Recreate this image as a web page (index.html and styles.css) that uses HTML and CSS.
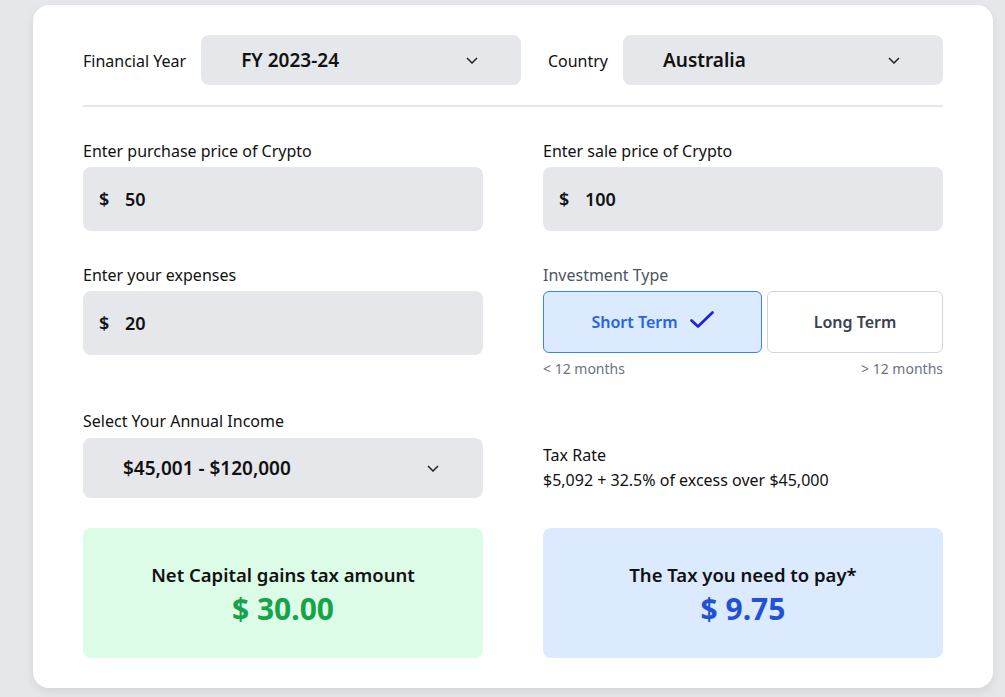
FILE: index.html
```html
<!DOCTYPE html>
<html lang="en">
<head>
<meta charset="utf-8">
<title>Crypto Tax Calculator</title>
<link rel="stylesheet" href="styles.css">
</head>
<body>
<div class="card">
  <div class="top-row">
    <div class="top-group">
      <span class="top-label">Financial Year</span>
      <div class="select top-select">
        <span class="select-value">FY 2023-24</span>
        <svg class="chev" width="12" height="7" viewBox="0 0 12 7"><path d="M1 1 L6 6 L11 1" fill="none" stroke="#222" stroke-width="1.5"/></svg>
      </div>
    </div>
    <div class="top-group">
      <span class="top-label">Country</span>
      <div class="select top-select">
        <span class="select-value">Australia</span>
        <svg class="chev" width="12" height="7" viewBox="0 0 12 7"><path d="M1 1 L6 6 L11 1" fill="none" stroke="#222" stroke-width="1.5"/></svg>
      </div>
    </div>
  </div>
  <div class="divider"></div>

  <div class="grid">
    <div class="field first">
      <div class="label">Enter purchase price of Crypto</div>
      <div class="input"><span class="cur">$</span><span>50</span></div>
    </div>
    <div class="field first">
      <div class="label">Enter sale price of Crypto</div>
      <div class="input"><span class="cur">$</span><span>100</span></div>
    </div>

    <div class="field">
      <div class="label">Enter your expenses</div>
      <div class="input"><span class="cur">$</span><span>20</span></div>
    </div>
    <div class="field">
      <div class="label muted">Investment Type</div>
      <div class="toggle">
        <div class="opt active">Short Term
          <svg class="check" width="24" height="18" viewBox="0 0 24 18"><path d="M1.5 9.5 L8 15.5 L22.5 1.5" fill="none" stroke="#1c1fe0" stroke-width="2.6" stroke-linecap="round" stroke-linejoin="round"/></svg>
        </div>
        <div class="opt">Long Term</div>
      </div>
      <div class="hints"><span>&lt; 12 months</span><span>&gt; 12 months</span></div>
    </div>

    <div class="field">
      <div class="label">Select Your Annual Income</div>
      <div class="select income-select">
        <span class="select-value">$45,001 - $120,000</span>
        <svg class="chev" width="12" height="7" viewBox="0 0 12 7"><path d="M1 1 L6 6 L11 1" fill="none" stroke="#222" stroke-width="1.5"/></svg>
      </div>
    </div>
    <div class="field taxrate">
      <div>Tax Rate</div>
      <div>$5,092 + 32.5% of excess over $45,000</div>
    </div>

    <div class="result green">
      <div class="result-title">Net Capital gains tax amount</div>
      <div class="result-amount">$ 30.00</div>
    </div>
    <div class="result blue">
      <div class="result-title">The Tax you need to pay*</div>
      <div class="result-amount">$ 9.75</div>
    </div>
  </div>
</div>
</body>
</html>
```
FILE: styles.css
```css
* { box-sizing: border-box; }
html, body { margin: 0; }
body {
  background: #e5e7eb;
  font-family: "Noto Sans", "Open Sans", sans-serif;
  color: #111;
  padding: 5px 0 0 33px;
  height: 697px;
  overflow: hidden;
}
.card {
  width: 960px;
  background: #fff;
  border-radius: 16px;
  box-shadow: 0 4px 10px rgba(0,0,0,0.08);
  padding: 30px 50px 30px 50px;
}
.top-row {
  display: flex;
  justify-content: space-between;
}
.top-group {
  display: flex;
  align-items: center;
  gap: 15px;
}
.top-label {
  font-size: 16px;
  color: #111;
  padding-top: 2px;
}
.select {
  background: #e5e7eb;
  border-radius: 8px;
  display: flex;
  align-items: center;
  justify-content: space-between;
  padding: 0 43px 0 40px;
  font-size: 19px;
  font-weight: 600;
}
.top-select { width: 320px; height: 50px; }
.income-select { width: 400px; height: 60px; margin-top: 5px; padding-right: 44px; }
.chev { display: block; }
.divider {
  height: 2px;
  background: #e5e7eb;
  margin: 20px 0 32px;
}
.grid {
  display: grid;
  grid-template-columns: 400px 400px;
  column-gap: 60px;
  row-gap: 30px;
}
.field.first { margin-bottom: 2px; }
.label {
  font-size: 16px;
  line-height: 24px;
  margin-bottom: 4px;
}
.label.muted { color: #4b5563; }
.input {
  height: 64px;
  background: #e5e7eb;
  border-radius: 8px;
  display: flex;
  align-items: center;
  padding-left: 16px;
  font-size: 18px;
  font-weight: 600;
}
.cur { width: 26px; }
.toggle {
  display: flex;
  gap: 5px;
  height: 62px;
}
.opt {
  display: flex;
  align-items: center;
  justify-content: center;
  border: 1px solid #d1d5db;
  border-radius: 6px;
  font-size: 16px;
  font-weight: 600;
  color: #374151;
  width: 176px;
}
.opt.active {
  width: 219px;
  background: #dbeafe;
  border-color: #3b82f6;
  color: #2563eb;
  gap: 12px;
}
.check { display: block; margin-top: -4px; }
.hints {
  display: flex;
  justify-content: space-between;
  font-size: 14px;
  line-height: 20px;
  color: #6b7280;
  margin-top: 6px;
}
.taxrate {
  font-size: 16px;
  line-height: 25px;
  padding-top: 34px;
}
.result {
  height: 130px;
  border-radius: 8px;
  display: flex;
  flex-direction: column;
  align-items: center;
  justify-content: center;
  padding-top: 4px;
}
.result.green { background: #dcfce7; }
.result.blue { background: #dbeafe; }
.result-title {
  font-size: 18.5px;
  font-weight: 600;
  line-height: 26px;
  margin-bottom: 1px;
}
.result-amount {
  font-size: 30px;
  font-weight: 700;
  line-height: 40px;
}
.green .result-amount { color: #16a34a; }
.blue .result-amount { color: #2251d8; }
```
